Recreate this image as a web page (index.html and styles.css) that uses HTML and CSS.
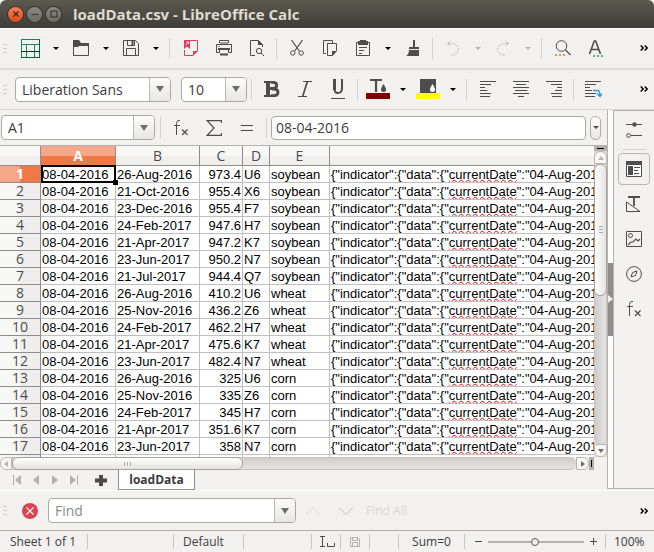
FILE: index.html
```html
<!DOCTYPE html>
<html lang="en">
<head>
<meta charset="utf-8">
<title>loadData.csv - LibreOffice Calc</title>
<link rel="stylesheet" href="styles.css">
</head>
<body>
<header class="titlebar">
  <button class="win win-close" aria-label="Close"><svg width="8" height="8" viewBox="0 0 8 8"><path d="M1.5 1.5l5 5M6.5 1.5l-5 5" stroke="#3c2a20" stroke-width="1.4"/></svg></button>
  <button class="win" aria-label="Minimize"><svg width="8" height="8" viewBox="0 0 8 8"><path d="M0.5 4.5h7" stroke="#3a3934" stroke-width="1.2"/></svg></button>
  <button class="win" aria-label="Maximize"><svg width="8" height="8" viewBox="0 0 8 8"><rect x="1" y="1" width="6" height="6" fill="none" stroke="#3a3934" stroke-width="1.2"/></svg></button>
  <h1>loadData.csv - LibreOffice Calc</h1>
</header>

<div class="toolbar toolbar-standard" role="toolbar" aria-label="Standard">
  <span class="grip"></span>
  <button class="tool" aria-label="New"><svg width="19" height="19" viewBox="0 0 19 19" fill="none" stroke="#0f8a63"><path d="M0 .5h19M.5 0v19M0 5.500h19M5.500 5v14M13.500 5v14"/><path d="M18.500 0v19M0 18.500h19" stroke="#0b6148"/><path d="M0 12.500h19" stroke="#073d2c"/></svg></button>
  <button class="drop" aria-label="New options"></button>
  <button class="tool" aria-label="Open"><svg width="16" height="16" viewBox="0 0 16 16"><path d="M0 0h6l2 3h8v3H6l-1 1H0z" fill="#4d4d4d"/><path d="M.5 5v10.500h15V5" fill="none" stroke="#4d4d4d"/></svg></button>
  <button class="drop" aria-label="Open options"></button>
  <button class="tool" aria-label="Save"><svg width="16" height="16" viewBox="0 0 16 16" fill="none" stroke="#4d4d4d"><path d="M.5.5h12l3 3v12H.5zM4.500.5v5h7v-5M3.500 15.500v-7h9v7"/><path d="M9.500 1v4" stroke-width="2"/></svg></button>
  <button class="drop" aria-label="Save options"></button>
  <span class="sep"></span>
  <button class="tool" aria-label="Export as PDF"><svg width="14" height="16" viewBox="0 0 14 16"><path d="M6 .5h7.500V11M.5 10v5.500H9" fill="none" stroke="#d9405a"/><path d="M0 0h6v9L3 6.500 0 9zM9 16v-5h5z" fill="#d9405a"/><path d="M1.500 5l3-3M2.500 2h2v2" stroke="#fff" stroke-width=".8" fill="none"/></svg></button>
  <button class="tool" aria-label="Print"><svg width="16" height="16" viewBox="0 0 16 16" fill="none" stroke="#4d4d4d"><path d="M3.500 3V.5h9V3M3.500 12.500h-3v-8h15v8h-3M2.500 6.500h1"/><path d="M3.500 9.500h9v3M3.500 9v4"/><path d="M2 9h12M4 14.500h8" stroke-width="2.200"/><path d="M4 3h8"/></svg></button>
  <button class="tool" aria-label="Print Preview"><svg width="16" height="16" viewBox="0 0 16 16" fill="none" stroke="#4d4d4d"><path d="M6 15.500H1.500V.5h8l4 4V7"/><path d="M9 0v5h5z" fill="#4d4d4d" stroke="none"/><circle cx="10" cy="11" r="2.700"/><path d="M12 13l3 3"/></svg></button>
  <span class="sep"></span>
  <button class="tool" aria-label="Cut"><svg width="14" height="16" viewBox="0 0 14 16" fill="none" stroke="#4d4d4d"><path d="M1.500 0l7.800 11M12.500 0L4.700 11" stroke-width="1.200"/><circle cx="2.800" cy="13" r="2.200"/><circle cx="11.200" cy="13" r="2.200"/></svg></button>
  <button class="tool" aria-label="Copy"><svg width="16" height="16" viewBox="0 0 16 16" fill="none" stroke="#4d4d4d"><path d="M4 13.500H1.500V.5h9V3"/><path d="M5.500 3.500h9v7l-4 5h-5z"/><path d="M10 16v-5h5z" fill="#4d4d4d" stroke="none"/></svg></button>
  <button class="tool" aria-label="Paste"><svg width="14" height="16" viewBox="0 0 14 16" fill="none" stroke="#4d4d4d"><path d="M.5 2.500h13v13H.5z"/><path d="M2 1h2V0h6v1h2v4H2z" fill="#4d4d4d" stroke="none"/><path d="M3 7.500h8M3 10.500h5M3 13.500h3"/></svg></button>
  <button class="drop" aria-label="Paste options"></button>
  <button class="tool" aria-label="Clone Formatting"><svg width="14" height="16" viewBox="0 0 14 16" fill="#4d4d4d"><path d="M7 0h2v7h4v2H3V7h4zM3 10h10v6H0q3-2 3-6z"/></svg></button>
  <span class="sep"></span>
  <button class="tool" aria-label="Undo" disabled><svg width="16" height="16" viewBox="0 0 16 16" fill="none" stroke="#bdbcba"><path d="M5.500 1l-3 2.500 3 2.500" /><path d="M3 3.500h4.500a5.500 5.500 0 010 11.500H6" stroke-dasharray="2 1"/></svg></button>
  <button class="drop" aria-label="Undo history" disabled></button>
  <button class="tool" aria-label="Redo" disabled><svg width="16" height="16" viewBox="0 0 16 16" fill="none" stroke="#bdbcba"><path d="M10.500 1l3 2.500-3 2.500"/><path d="M13 3.500H8.500a5.500 5.500 0 000 11.500H10" stroke-dasharray="2 1"/></svg></button>
  <button class="drop" aria-label="Redo history" disabled></button>
  <span class="sep"></span>
  <button class="tool" aria-label="Find and Replace"><svg width="16" height="16" viewBox="0 0 16 16" fill="none" stroke="#4d4d4d"><circle cx="6.500" cy="6" r="5.300"/><path d="M10.500 10l5 5" stroke-width="1.300"/><path d="M0 15h2M4 15h2M8 15h2" stroke="#fa8a6c" stroke-width="2"/></svg></button>
  <button class="tool" aria-label="Spelling"><svg width="16" height="17" viewBox="0 0 16 17" fill="none" stroke="#4d4d4d"><path d="M1.500 14L6.300 1h1.400l4.800 13M3.300 9.500h7.400" stroke-width="1.600"/><path d="M5 16h2M9 16h2M13 16h2" stroke="#4cb882" stroke-width="2"/></svg></button>
  <button class="more" aria-label="More"><svg width="8" height="6" viewBox="0 0 8 6" fill="none" stroke="#000" stroke-width="1.500"><path d="M.7.500L3.200 3 .7 5.500M4.700.500L7.200 3 4.700 5.500"/></svg></button>
</div>

<div class="toolbar toolbar-format" role="toolbar" aria-label="Formatting">
  <span class="grip"></span>
  <div class="combo combo-font"><select aria-label="Font Name"><option>Liberation Sans</option></select><span class="caret"></span></div>
  <div class="combo combo-size"><select aria-label="Font Size"><option>10</option></select><span class="caret"></span></div>
  <span class="sep"></span>
  <button class="tool" aria-label="Bold"><svg width="16" height="16" viewBox="0 0 16 16" fill="none" stroke="#4d4d4d"><path d="M0 1h8M0 15h8" stroke-width="2"/><path d="M4 0v16" stroke-width="4"/><path d="M7 1.300h2q3.700 0 3.700 3T9 7.500H6M8 8h2q4 0 4 3.300T10 14.700H7" stroke-width="2.800"/></svg></button>
  <button class="tool" aria-label="Italic"><svg width="14" height="16" viewBox="0 0 14 16" fill="none" stroke="#4d4d4d"><path d="M5 .5h9M0 15.500h9"/><path d="M9.500 0l-5 16" stroke-width="1.700"/></svg></button>
  <button class="tool" aria-label="Underline"><svg width="14" height="20" viewBox="0 0 14 20" fill="none" stroke="#4d4d4d"><path d="M3.500 0v10q0 4 3.500 4t4-4V0" stroke-width="2"/><path d="M3.500 0v11" stroke-width="3"/><path d="M0 19.500h14"/></svg></button>
  <span class="sep"></span>
  <button class="tool" aria-label="Font Color"><svg width="24" height="20" viewBox="0 0 24 20"><path d="M4 1h12M10 1v12" stroke="#4d4d4d" stroke-width="2.200"/><path d="M17.500 5q-2.500 4-2.500 5.500a2.500 2.500 0 005 0Q20 9 17.500 5z" fill="#4d4d4d"/><path d="M0 14h24v6H0z" fill="#800000"/></svg></button>
  <button class="drop" aria-label="Font Color options"></button>
  <button class="tool" aria-label="Background Color"><svg width="24" height="20" viewBox="0 0 24 20"><path d="M4 0h16v14H4z" fill="#4d4d4d"/><path d="M16.500 5Q14 9 14 10.500a2.500 2.500 0 005 0Q19 9 16.500 5z" fill="#fff"/><path d="M0 14h24v6H0z" fill="#ff0"/></svg></button>
  <button class="drop" aria-label="Background Color options"></button>
  <span class="sep"></span>
  <button class="tool" aria-label="Align Left"><svg width="16" height="16" viewBox="0 0 16 16" stroke="#4d4d4d"><path d="M0 .5h16M0 3.500h11M0 6.500h5M0 9.500h7M0 12.500h11M0 15.500h10"/></svg></button>
  <button class="tool" aria-label="Center"><svg width="16" height="16" viewBox="0 0 16 16" stroke="#4d4d4d"><path d="M0 .5h16M3 3.500h10M0 6.500h16M2 9.500h12M0 12.500h16M5 15.500h6"/></svg></button>
  <button class="tool" aria-label="Align Right"><svg width="16" height="16" viewBox="0 0 16 16" stroke="#4d4d4d"><path d="M0 .5h16M5 3.500h11M11 6.500h5M9 9.500h7M5 12.500h11M6 15.500h10"/></svg></button>
  <span class="sep"></span>
  <button class="tool" aria-label="Wrap Text"><svg width="17" height="17" viewBox="0 0 17 17" stroke="#4d4d4d" fill="none"><path d="M0 .5h16M0 3.500h11M0 6.500h5M0 9.500h7M0 12.500h11M0 15.500h10"/><path d="M8 9.500h4q3 0 3 5M12 12.500l3 3 2-3" stroke="#2196e8" stroke-width="1.300"/></svg></button>
  <button class="more" aria-label="More"><svg width="8" height="6" viewBox="0 0 8 6" fill="none" stroke="#000" stroke-width="1.500"><path d="M.7.500L3.200 3 .7 5.500M4.700.500L7.200 3 4.700 5.500"/></svg></button>
</div>

<main class="workspace">
  <section class="document">
    <div class="formulabar">
      <div class="combo combo-name"><input type="text" value="A1" aria-label="Name Box"><button class="caret" aria-label="Named ranges"></button></div>
      <span class="sep"></span>
      <button class="tool" aria-label="Function Wizard"><svg width="16" height="18" viewBox="0 0 16 18" fill="none" stroke="#4d4d4d"><path d="M7 1.500H6q-2.500 0-2.500 3V16M1 6.500h6"/><path d="M9 10.500l5.500 5.500M14.500 10.500L9 16" stroke-width="1.200"/></svg></button>
      <button class="tool" aria-label="Sum"><svg width="16" height="16" viewBox="0 0 16 16" fill="none" stroke="#4d4d4d" stroke-width="1.200"><path d="M15.500 3V.6H1.200L8 8l-6.800 7.400h14.300V13"/></svg></button>
      <button class="tool" aria-label="Formula"><svg width="12" height="6" viewBox="0 0 12 6" stroke="#4d4d4d"><path d="M0 .5h12M0 5.500h12"/></svg></button>
      <span class="sep"></span>
      <input class="formula" type="text" value="08-04-2016" aria-label="Input line">
      <button class="expand" aria-label="Expand Formula Bar"></button>
    </div>

    <div class="sheet">
      <div class="grid">
        <table>
          <colgroup><col class="w-head"><col class="w-a"><col class="w-b"><col class="w-c"><col class="w-d"><col class="w-e"><col></colgroup>
          <thead><tr><th></th><th class="on">A</th><th>B</th><th>C</th><th>D</th><th>E</th><th></th></tr></thead>
          <tbody id="rows"></tbody>
        </table>
      </div>
      <div class="vscroll">
        <span class="split-v"></span>
        <button class="vs-btn" aria-label="Scroll up"><svg width="6" height="4" viewBox="0 0 6 4"><path d="M0 4l3-4 3 4z" fill="#b5b4b2"/></svg></button>
        <div class="vs-track"><div class="vs-thumb"></div></div>
        <button class="vs-btn vs-down" aria-label="Scroll down"><svg width="6" height="4" viewBox="0 0 6 4"><path d="M0 0l3 4 3-4z" fill="#6e6d6b"/></svg></button>
      </div>
    </div>

    <div class="hscroll">
      <button class="hs-btn" aria-label="Scroll left"><svg width="4" height="6" viewBox="0 0 4 6"><path d="M4 0L0 3l4 3z" fill="#b5b4b2"/></svg></button>
      <div class="hs-track"><div class="hs-thumb"></div></div>
      <button class="hs-btn hs-right" aria-label="Scroll right"><svg width="4" height="6" viewBox="0 0 4 6"><path d="M0 0l4 3-4 3z" fill="#6e6d6b"/></svg></button>
      <span class="split-h"></span>
    </div>

    <nav class="tabs">
      <button class="nav" aria-label="First sheet"><svg width="8" height="10" viewBox="0 0 8 10"><path d="M0 0h1v10H0zM8 0v10L2 5z" fill="#b3b2b0"/></svg></button>
      <button class="nav" aria-label="Previous sheet"><svg width="8" height="10" viewBox="0 0 8 10"><path d="M7 0v10L1 5z" fill="#b3b2b0"/></svg></button>
      <button class="nav" aria-label="Next sheet"><svg width="8" height="10" viewBox="0 0 8 10"><path d="M1 0v10l6-5z" fill="#b3b2b0"/></svg></button>
      <button class="nav" aria-label="Last sheet"><svg width="8" height="10" viewBox="0 0 8 10"><path d="M7 0h1v10H7zM0 0v10l6-5z" fill="#b3b2b0"/></svg></button>
      <button class="add" aria-label="Add sheet"><svg width="12" height="11" viewBox="0 0 12 11"><path d="M4 0h4v3.500h4v4H8V11H4V7.500H0v-4h4z" fill="#4a4a48"/></svg></button>
      <button class="tab">loadData</button>
    </nav>
  </section>

  <div class="splitter"><button aria-label="Hide sidebar"><svg width="5" height="8" viewBox="0 0 5 8"><path d="M0 0l5 4-5 4z" fill="#f2f1f0"/></svg></button></div>

  <aside class="sidebar">
    <button class="side" aria-label="Sidebar Settings"><svg width="16" height="16" viewBox="0 0 16 16" fill="none" stroke="#4d4d4d"><path d="M0 2.500h16M5 13.500h11"/><circle cx="8.500" cy="2.500" r="2.200" fill="#4d4d4d" stroke="none"/><circle cx="2.500" cy="13.500" r="1.900"/></svg></button>
    <span class="rule"></span>
    <button class="side active" aria-label="Properties"><svg width="16" height="16" viewBox="0 0 16 16"><path d="M.5.500h15v15H.5z" fill="#fff" stroke="#4d4d4d"/><path d="M0 0h16v4H0zM2 5h5v9H2z" fill="#4d4d4d"/><path d="M8 6.500h6M8 9.500h4M8 12.500h5" stroke="#4d4d4d"/></svg></button>
    <button class="side" aria-label="Styles"><svg width="16" height="16" viewBox="0 0 16 16" fill="none" stroke="#4d4d4d"><path d="M2 1h12M8 1v9" stroke-width="1.800"/><path d="M.5 6v9.500h13.500z"/></svg></button>
    <button class="side" aria-label="Gallery"><svg width="16" height="16" viewBox="0 0 16 16" fill="none" stroke="#4d4d4d"><path d="M.5.500h15v15H.5z"/><circle cx="4.500" cy="4.500" r="2"/><path d="M2 14l3-3h2l3-3 2 2 2-2" stroke-width="1.200"/></svg></button>
    <button class="side" aria-label="Navigator"><svg width="16" height="16" viewBox="0 0 16 16" fill="none" stroke="#4d4d4d"><circle cx="8" cy="8" r="7.400"/><path d="M11 5L9.500 9.500 5 11l1.500-4.500z"/></svg></button>
    <button class="side" aria-label="Functions"><svg width="16" height="18" viewBox="0 0 16 18" fill="none" stroke="#4d4d4d"><path d="M7 1.500H6q-2.500 0-2.500 3V16M1 6.500h6"/><path d="M9 10.500l5.500 5.500M14.500 10.500L9 16" stroke-width="1.200"/></svg></button>
  </aside>
</main>

<div class="findbar" role="toolbar" aria-label="Find">
  <span class="grip"></span>
  <button class="close-find" aria-label="Close Find Bar"><svg width="16" height="16" viewBox="0 0 16 16"><circle cx="8" cy="8" r="8" fill="#da4453"/><path d="M4.500 4.500l7 7M11.500 4.500l-7 7" stroke="#fff" stroke-width="1.100"/></svg></button>
  <div class="combo combo-find"><input type="text" placeholder="Find" aria-label="Find"><button class="caret" aria-label="Search history"></button></div>
  <button class="tool" aria-label="Find Previous" disabled><svg width="14" height="8" viewBox="0 0 14 8" fill="none" stroke="#dbdad8"><path d="M0 7.500l7-7 7 7"/></svg></button>
  <button class="tool" aria-label="Find Next" disabled><svg width="14" height="8" viewBox="0 0 14 8" fill="none" stroke="#bebdbb"><path d="M0 .5l7 7 7-7"/></svg></button>
  <button class="find-all" disabled>Find All</button>
  <button class="more" aria-label="More"><svg width="8" height="6" viewBox="0 0 8 6" fill="none" stroke="#000" stroke-width="1.500"><path d="M.7.500L3.200 3 .7 5.500M4.700.500L7.200 3 4.700 5.500"/></svg></button>
</div>

<footer class="status">
  <span class="st-sheet">Sheet 1 of 1</span>
  <span class="st-blank"></span>
  <span class="st-style">Default</span>
  <span class="st-lang"></span>
  <span class="st-mode"><svg width="15" height="11" viewBox="0 0 15 11" fill="none" stroke="#4d4d4d"><path d="M0 .5h5M2.500.500v10M0 10.500h5M7.500 7v3.500h7V7"/></svg></span>
  <span class="st-save"><svg width="10" height="10" viewBox="0 0 10 10" fill="none" stroke="#b3b2b0"><path d="M.5.500h7.500l1.500 1.500v7.500h-9zM2.500.500v3h5v-3M2.500 9.500v-4h5v4"/></svg></span>
  <span class="st-sign"></span>
  <span class="st-sum">Sum=0</span>
  <span class="st-zoom"><svg width="7" height="7" viewBox="0 0 7 7"><path d="M0 3.500h7" stroke="#4d4d4d"/></svg><input type="range" min="0" max="100" value="49" aria-label="Zoom"><svg width="7" height="7" viewBox="0 0 7 7"><path d="M0 3.500h7M3.500 0v7" stroke="#4d4d4d"/></svg></span>
  <span class="st-pct">100%</span>
</footer>
<script src="script.js"></script>
</body>
</html>
```
FILE: styles.css
```css
* { box-sizing: border-box; }

body {
  margin: 0;
  min-height: 100vh;
  display: flex;
  flex-direction: column;
  background: #f2f1f0;
  color: #3c3c3c;
  font-family: "Open Sans", "Noto Sans", sans-serif;
  font-size: 14px;
}

button {
  display: flex;
  align-items: center;
  justify-content: center;
  margin: 0;
  padding: 0;
  border: 0;
  background: none;
  color: inherit;
  font: inherit;
}

svg { display: block; flex: none; }

/* Title bar */
.titlebar {
  display: flex;
  align-items: center;
  gap: 4px;
  height: 28px;
  padding-left: 8px;
  background: linear-gradient(#5b594e, #5a584d 6%, #3d3c38);
  border-radius: 6px 6px 0 0;
}
.titlebar h1 {
  margin: 0 0 0 8px;
  color: #dfdbd2;
  font-size: 15px;
  line-height: 28px;
  font-weight: 700;
  white-space: nowrap;
}
.win {
  width: 15px;
  height: 15px;
  border-radius: 50%;
  background: linear-gradient(#8b8980, #6b6a63);
  box-shadow: 0 0 0 1px #35342f;
}
.win-close { background: linear-gradient(#f58057, #df4a16); }

/* Toolbars */
.toolbar, .formulabar, .findbar {
  display: flex;
  align-items: center;
}
.toolbar-standard {
  height: 42px;
  border-top: 1px solid #fff;
  border-bottom: 2px solid #dcdbd9;
  padding-bottom: 1px;
}
.toolbar-format {
  height: 40px;
  padding-bottom: 1px;
  border-bottom: 1px solid #d6d5d3;
}
.grip {
  width: 4px;
  height: 9px;
  margin: 0 7px 0 3px;
  background: repeating-linear-gradient(#cfcecc 0 1px, transparent 1px 4px);
}
.tool { width: 33px; height: 24px; flex: none; }
.drop { width: 17px; height: 24px; flex: none; }
.drop::before {
  content: "";
  border: 3px solid transparent;
  border-top-color: #000;
  border-bottom: 0;
}
.drop:disabled::before { border-top-color: #b5b4b2; }
.sep {
  width: 1px;
  height: 21px;
  margin: 0 3px;
  background: #d3d2d0;
  flex: none;
}
.drop + .sep { margin: 0 4px 0 5px; }
.more { width: 20px; height: 24px; margin-left: auto; }

/* Combo boxes */
.combo {
  display: grid;
  grid-template-columns: 1fr 21px;
  height: 25px;
  border: 1px solid #a9a8a5;
  border-radius: 4px;
  background: #fff;
  overflow: hidden;
  flex: none;
}
.combo select, .combo input {
  grid-row: 1;
  grid-column: 1;
  min-width: 0;
  width: 100%;
  padding: 0 0 0 6px;
  border: 0;
  outline: 0;
  background: none;
  color: #3c3c3c;
  font: inherit;
  appearance: none;
}
.combo select { grid-column: 1 / -1; }
.combo input::placeholder { color: #8c8b89; }
.caret {
  display: flex;
  align-items: center;
  justify-content: center;
  grid-row: 1;
  grid-column: 2;
  border-left: 1px solid #b8b7b4;
  background: linear-gradient(#fbfbfa, #e8e7e5);
  pointer-events: none;
}
.caret::before {
  content: "";
  border: 4px solid transparent;
  border-top: 6px solid #6e6d6b;
  border-bottom: 0;
}
.combo-font { width: 156px; margin: 0 10px 0 1px; }
.combo-size { width: 66px; margin-right: 1px; }
.combo-name { width: 154px; margin: 0 2px 0 1px; }
.combo-find { width: 248px; }

/* Workspace */
.workspace { display: flex; flex: 1; }
.document {
  display: flex;
  flex-direction: column;
  flex: 1;
  min-width: 0;
}
.formulabar { height: 35px; }
.formula {
  flex: 1;
  min-width: 0;
  height: 24px;
  margin: 0 4px 0 1px;
  padding: 0 4px;
  border: 1px solid #a9a8a5;
  border-radius: 4px;
  background: #fff;
  color: #3c3c3c;
  font: inherit;
}
.expand {
  width: 11px;
  height: 24px;
  margin-right: 6px;
  border: 1px solid #b0afac;
  border-radius: 5px;
  background: linear-gradient(#fff, #e6e5e3);
}
.expand::before {
  content: "";
  border: 3px solid transparent;
  border-top-color: #4d4d4d;
  border-bottom: 0;
}

/* Sheet */
.sheet {
  display: flex;
  flex: 1;
  border-top: 1px solid #b3b2b0;
}
.grid { flex: 1; min-width: 0; overflow: hidden; background: #fff; }
table {
  width: 100%;
  table-layout: fixed;
  border-collapse: separate;
  border-spacing: 0;
}
.w-head { width: 41px; }
.w-a { width: 75px; }
.w-b { width: 84px; }
.w-c { width: 43px; }
.w-d { width: 27px; }
.w-e { width: 60px; }
th {
  padding: 0;
  border-right: 1px solid #8f8e8c;
  border-bottom: 1px solid #8f8e8c;
  color: #4c4c4c;
  font-size: 14px;
  font-weight: 400;
  text-align: center;
}
thead th {
  height: 20px;
  line-height: 19px;
  background: linear-gradient(#f7f7f6 50%, #f0efee 50%);
}
thead th:last-child { border-right: 0; }
tbody th {
  height: 17px;
  line-height: 16px;
  background: linear-gradient(90deg, #f7f7f6 50%, #efeeed 50%);
}
th.on { color: #fff; font-weight: 700; }
thead th.on { background: linear-gradient(#f6a78a 50%, #f07746 50%); }
tbody th.on { background: linear-gradient(90deg, #f6a78a 50%, #f07746 50%); }
td {
  height: 17px;
  padding: 1px 1px 0;
  border-right: 1px solid #c0c0c0;
  border-bottom: 1px solid #c0c0c0;
  color: #000;
  font-family: "Liberation Sans", sans-serif;
  font-size: 13px;
  line-height: 15px;
  white-space: nowrap;
}
td:last-child { overflow: hidden; border-right: 0; }
td.num { text-align: right; }
td.cursor { position: relative; }
td.cursor::before {
  content: "";
  position: absolute;
  inset: -1px -1px -1px 0;
  border: 2px solid #000;
}
td.cursor::after {
  content: "";
  position: absolute;
  right: -3px;
  bottom: -3px;
  width: 5px;
  height: 5px;
  background: #000;
}
.typo {
  text-decoration: underline wavy #f00000 1px;
  text-underline-offset: 0;
  text-decoration-skip-ink: none;
}
.peek th, .peek td { height: 2px; padding: 0; border-bottom: 0; line-height: 0; }

/* Scrollbars */
.vscroll {
  display: flex;
  flex-direction: column;
  width: 13px;
  background: #dddcda;
}
.split-v {
  height: 5px;
  background: linear-gradient(#000, #000) center / 7px 1px no-repeat #b3b2b0;
}
.vs-btn {
  height: 13px;
  border: 1px solid #b8b7b4;
  border-radius: 6px 6px 0 0;
  background: #f7f6f5;
}
.vs-down { border-radius: 0 0 6px 6px; }
.vs-track {
  flex: 1;
  border: 1px solid #c4c3c1;
  border-width: 0 1px;
  border-radius: 0 0 6px 6px;
  background: linear-gradient(90deg, #cfcecc, #e4e3e1);
}
.vs-thumb {
  height: 47%;
  margin: 0 -1px;
  border: 1px solid #a3a29f;
  border-radius: 6px;
  background:
    repeating-linear-gradient(#aaa9a6 0 1px, transparent 1px 3px) center / 4px 7px no-repeat,
    linear-gradient(90deg, #fff, #e4e3e1);
}
.hscroll {
  display: flex;
  height: 13px;
  margin-right: 13px;
  background: #f2f1f0;
}
.hs-btn {
  width: 12px;
  border: 1px solid #b8b7b4;
  border-radius: 6px 0 0 6px;
  background: #f7f6f5;
}
.hs-right { width: 13px; border-radius: 0 6px 6px 0; }
.hs-track {
  flex: 1;
  border: 1px solid #c4c3c1;
  border-width: 1px 0;
  border-radius: 0 6px 6px 0;
  background: linear-gradient(#cfcecc, #e4e3e1);
}
.hs-thumb {
  width: 41%;
  height: 13px;
  margin: -1px 0;
  border: 1px solid #a3a29f;
  border-radius: 6px;
  background:
    repeating-linear-gradient(90deg, #aaa9a6 0 1px, transparent 1px 3px) center / 7px 4px no-repeat,
    linear-gradient(#fff, #e4e3e1);
}
.split-h {
  width: 5px;
  background: linear-gradient(#000, #000) center / 1px 7px no-repeat #b3b2b0;
}

/* Sheet tabs */
.tabs { display: flex; height: 20px; padding-left: 7px; }
.nav { width: 19px; }
.add { width: 35px; }
.tab {
  width: 77px;
  border: 1px solid #8f8e8c;
  border-top: 0;
  background: #fff;
  font-size: 12px;
  font-weight: 700;
}

/* Sidebar */
.splitter {
  display: flex;
  align-items: center;
  width: 6px;
  margin-bottom: 1px;
  border-left: 1px solid #b3b2b0;
  border-bottom: 1px solid #b3b2b0;
  background: #fff;
}
.splitter button { width: 6px; height: 73px; background: #8f8e8c; }
.sidebar {
  display: flex;
  flex-direction: column;
  align-items: center;
  gap: 3px;
  width: 41px;
  margin-bottom: 1px;
  padding-top: 3px;
  border: 1px solid #b3b2b0;
  border-right: 0;
}
.side { width: 32px; height: 32px; }
.side.active { border: 1px solid #b8b7b4; border-radius: 4px; }
.rule { width: 23px; height: 1px; background: #d3d2d0; }

/* Find bar */
.findbar {
  height: 41px;
  border-top: 1px solid #fff;
  border-bottom: 1px solid #b3b2b0;
}
.close-find { width: 32px; height: 24px; }
.combo-find { margin-left: 2px; }
.find-all { margin-left: 4px; color: #dad7d0; font-size: 12px; }

/* Status bar */
.status {
  display: flex;
  align-items: center;
  height: 21px;
  font-size: 12px;
}
.status > span {
  display: flex;
  align-items: center;
  flex: none;
  height: 15px;
  padding-left: 9px;
  border-right: 1px solid #c8c7c5;
  white-space: nowrap;
}
.status .st-sheet { width: 88px; padding-left: 10px; }
.status .st-blank { width: 86px; }
.status .st-style { width: 70px; }
.status .st-lang { width: 68px; }
.status .st-mode { width: 29px; padding-left: 8px; }
.status .st-save { width: 29px; }
.status .st-sign { width: 29px; }
.status .st-sum { width: 66px; justify-content: center; padding: 0; }
.status .st-zoom { flex: 1; min-width: 0; gap: 6px; padding: 0 8px 0 10px; }
.status .st-pct { width: 48px; padding-left: 8px; border: 0; }
.st-zoom input {
  flex: 1;
  min-width: 0;
  height: 12px;
  margin: 0;
  appearance: none;
  background: linear-gradient(#b3b2b0, #b3b2b0) center / 100% 2px no-repeat;
}
.st-zoom input::-webkit-slider-thumb {
  appearance: none;
  width: 8px;
  height: 8px;
  border: 1px solid #5c5b59;
  border-radius: 50%;
  background: #f2f1f0;
}
```
FILE: script.js
```js
const rows = [
  ["26-Aug-2016", "973.4", "U6", "soybean"],
  ["21-Oct-2016", "955.4", "X6", "soybean"],
  ["23-Dec-2016", "955.4", "F7", "soybean"],
  ["24-Feb-2017", "947.6", "H7", "soybean"],
  ["21-Apr-2017", "947.2", "K7", "soybean"],
  ["23-Jun-2017", "950.2", "N7", "soybean"],
  ["21-Jul-2017", "944.4", "Q7", "soybean"],
  ["26-Aug-2016", "410.2", "U6", "wheat"],
  ["25-Nov-2016", "436.2", "Z6", "wheat"],
  ["24-Feb-2017", "462.2", "H7", "wheat"],
  ["21-Apr-2017", "475.6", "K7", "wheat"],
  ["23-Jun-2017", "482.4", "N7", "wheat"],
  ["26-Aug-2016", "325", "U6", "corn"],
  ["25-Nov-2016", "335", "Z6", "corn"],
  ["24-Feb-2017", "345", "H7", "corn"],
  ["21-Apr-2017", "351.6", "K7", "corn"],
  ["23-Jun-2017", "358", "N7", "corn"]
];

const body = document.getElementById("rows");
body.innerHTML = rows.map(([expiry, price, code, crop], i) => `
  <tr>
    <th${i === 0 ? ' class="on"' : ""}>${i + 1}</th>
    <td${i === 0 ? ' class="cursor"' : ""}>08-04-2016</td>
    <td>${expiry}</td>
    <td class="num">${price}</td>
    <td>${code}</td>
    <td>${crop}</td>
    <td>{"indicator":{"data":{"<span class="typo">currentDate</span>":"04-Aug-201</td>
  </tr>`).join("") + '<tr class="peek"><th></th><td></td><td></td><td></td><td></td><td></td><td></td></tr>';
```
